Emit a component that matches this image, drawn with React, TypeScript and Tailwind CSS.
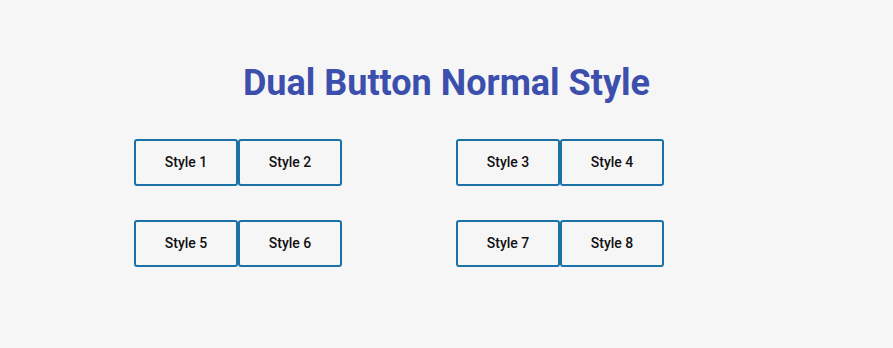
const pairs = [
  ["Style 1", "Style 2"],
  ["Style 3", "Style 4"],
  ["Style 5", "Style 6"],
  ["Style 7", "Style 8"],
];

function DualButton({ left, right }: { left: string; right: string }) {
  return (
    <div className="flex w-[208px]">
      <button className="h-[47px] w-[104px] rounded-[3px] border-2 border-[#1b72a8] text-[14px] font-medium text-[#111]">
        {left}
      </button>
      <button className="h-[47px] w-[104px] rounded-[3px] border-2 border-[#1b72a8] text-[14px] font-medium text-[#111]">
        {right}
      </button>
    </div>
  );
}

export default function App() {
  return (
    <main className="h-[348px] w-[893px] bg-[#f6f6f7] font-['Roboto',sans-serif]">
      <h1 className="pt-[61px] text-center text-[36px] font-bold leading-[44px] text-[#3c4fac]">
        Dual Button Normal Style
      </h1>
      <div className="mt-[34px] grid grid-cols-[322px_322px] gap-y-[34px] pl-[134px]">
        {pairs.map(([l, r]) => (
          <DualButton key={l} left={l} right={r} />
        ))}
      </div>
    </main>
  );
}
